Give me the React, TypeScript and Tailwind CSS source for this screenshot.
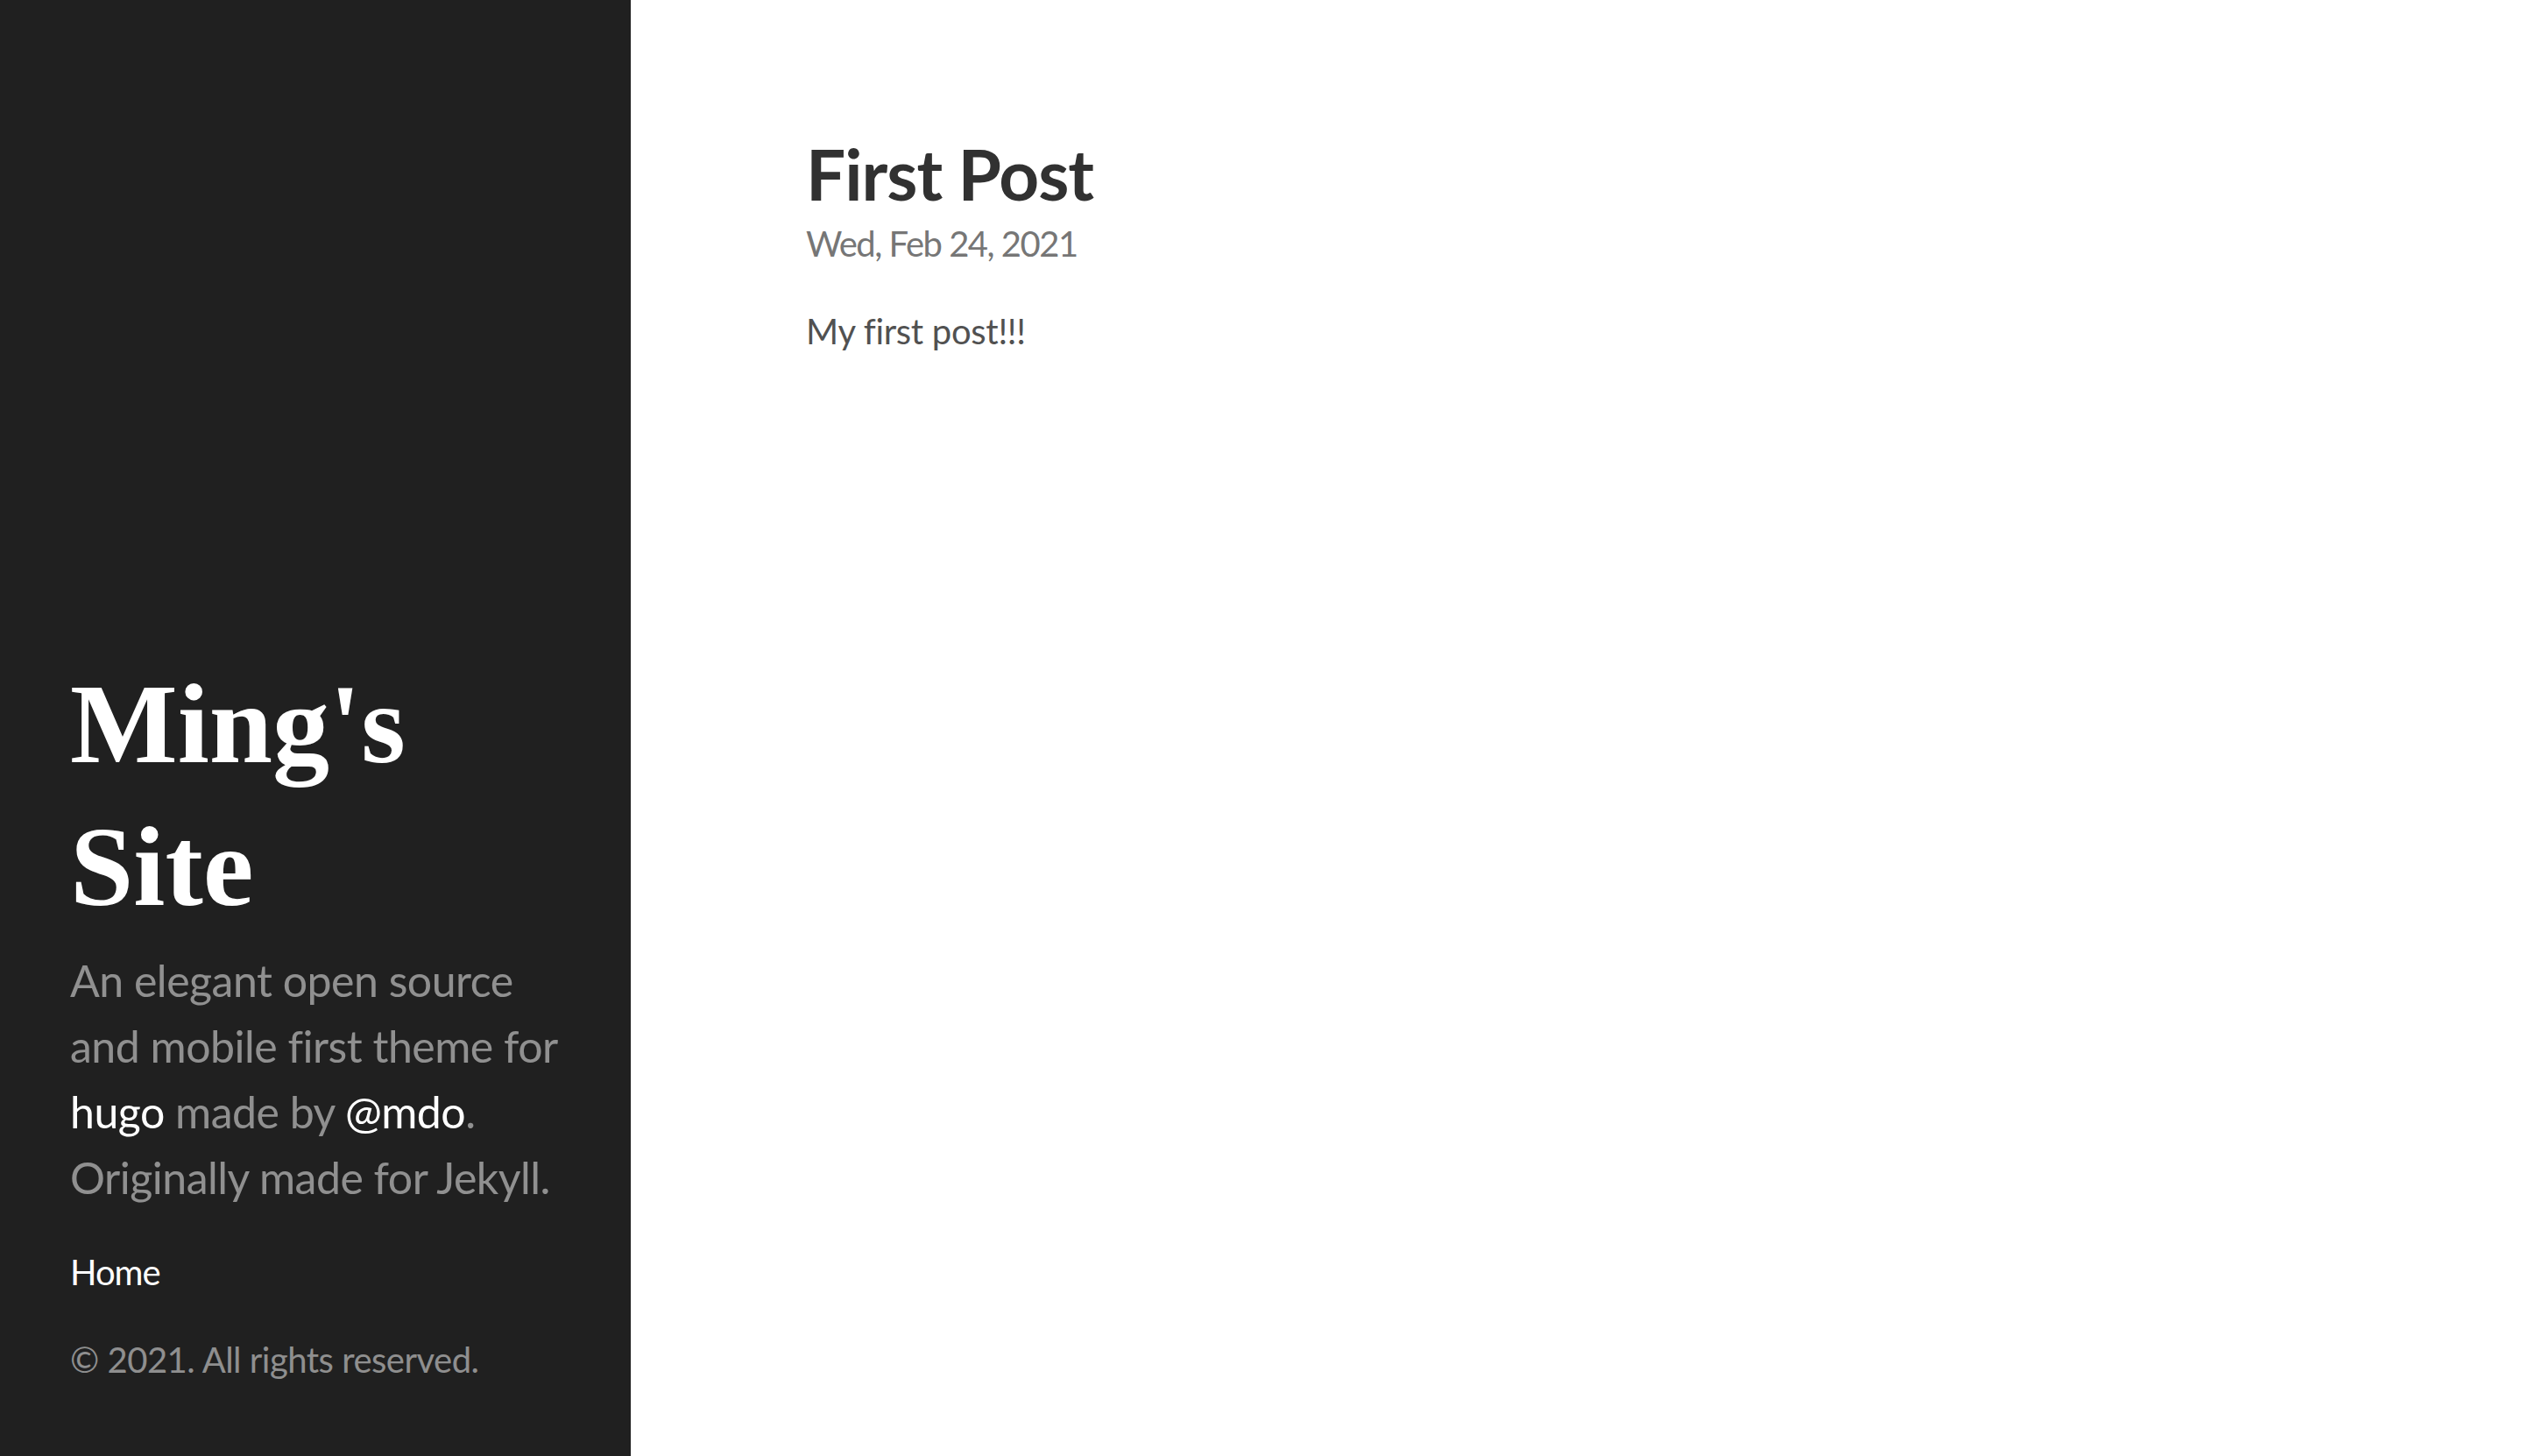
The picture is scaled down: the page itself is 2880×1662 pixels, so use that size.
export default function App() {
  const sans = { fontFamily: 'Lato, "PT Sans", "Liberation Sans", sans-serif' };
  return (
    <div className="flex min-h-[1662px] w-full bg-white" style={sans}>
      <aside className="flex w-[720px] shrink-0 flex-col justify-end bg-[#202020] px-[80px] pb-[80px] text-white/50">
        <h1
          className="mb-[12px] text-[130px] font-bold leading-[162.5px] text-white"
          style={{ fontFamily: '"Liberation Serif", "Times New Roman", serif' }}
        >
          Ming's
          <br />
          Site
        </h1>
        <p className="mb-[40px] whitespace-nowrap text-[50px] leading-[75px] tracking-[-0.5px]">
          An elegant open source
          <br />
          and mobile first theme for
          <br />
          <a className="text-white" href="#">hugo</a> made by <a className="text-white" href="#">@mdo</a>.
          <br />
          Originally made for Jekyll.
        </p>
        <nav>
          <ul className="mb-[40px]">
            <li className="text-[40px] leading-[60px] tracking-[-1px]">
              <a className="text-white" href="#">Home</a>
            </li>
          </ul>
        </nav>
        <p className="text-[40px] leading-[60px] tracking-[-0.5px]">© 2021. All rights reserved.</p>
      </aside>
      <main className="flex-1 pl-[200px] pt-[148px]">
        <div className="w-[760px]">
          <h1 className="text-[80px] font-bold leading-[100px] tracking-[-1px] text-[#313131]">First Post</h1>
          <span className="mb-[40px] block text-[40px] leading-[60px] tracking-[-1.5px] text-[#767676]">Wed, Feb 24, 2021</span>
          <p className="text-[40px] leading-[60px] tracking-[-0.3px] text-[#515151]">My first post!!!</p>
        </div>
      </main>
    </div>
  );
}
